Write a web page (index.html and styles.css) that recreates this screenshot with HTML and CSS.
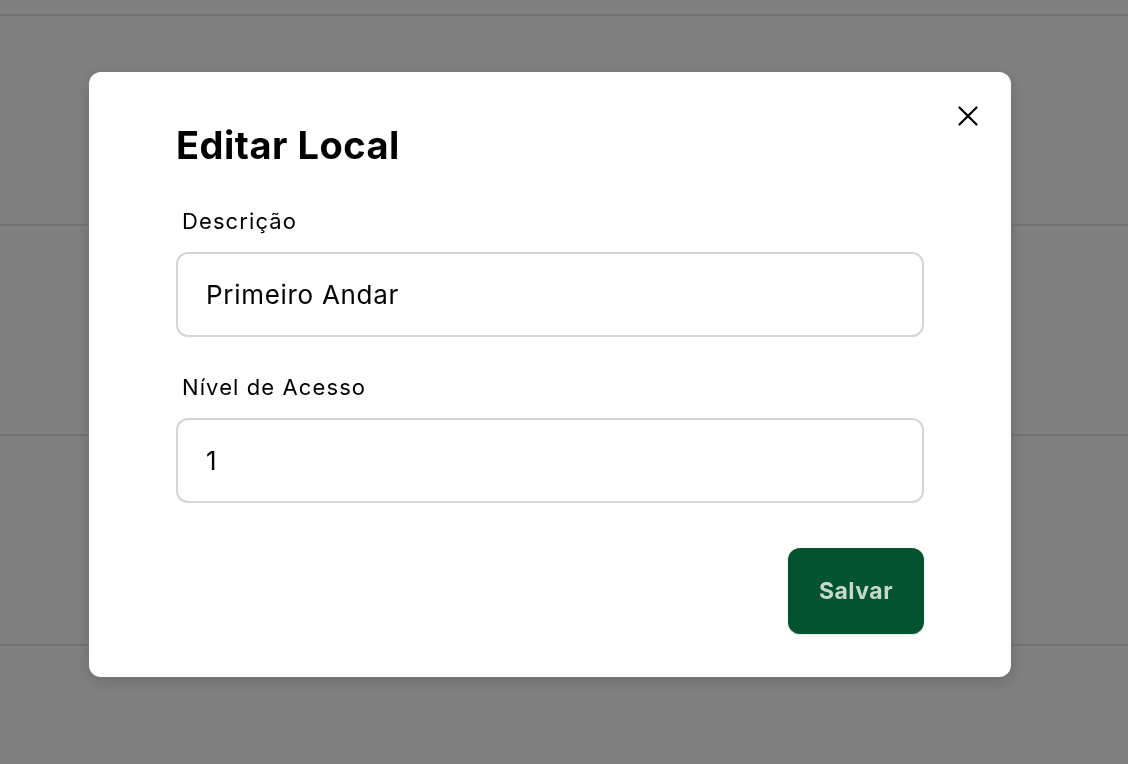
FILE: index.html
```html
<!DOCTYPE html>
<html lang="pt-BR">
<head>
<meta charset="utf-8">
<title>Editar Local</title>
<link rel="stylesheet" href="styles.css">
</head>
<body>
<div class="page">
  <div class="top-bar"></div>
  <div class="row"></div>
  <div class="row"></div>
  <div class="row"></div>
</div>
<div class="overlay">
  <div class="modal">
    <button class="close" aria-label="Fechar">
      <svg width="20" height="20" viewBox="0 0 20 20"><path d="M1.5 1.5 L18.5 18.5 M18.5 1.5 L1.5 18.5" stroke="#000" stroke-width="2.2" stroke-linecap="round" fill="none"/></svg>
    </button>
    <h2 class="title">Editar Local</h2>
    <form class="form">
      <label class="label" for="desc">Descrição</label>
      <input class="input" id="desc" type="text" value="Primeiro Andar">
      <label class="label label-second" for="nivel">Nível de Acesso</label>
      <input class="input" id="nivel" type="text" value="1">
      <div class="actions">
        <button type="button" class="save">Salvar</button>
      </div>
    </form>
  </div>
</div>
</body>
</html>
```
FILE: styles.css
```css
* { box-sizing: border-box; }
html, body { margin: 0; padding: 0; }
body {
  font-family: Inter, "Noto Sans", sans-serif;
  background: #ffffff;
  width: 1128px;
  height: 764px;
  overflow: hidden;
}
.page { display: flex; flex-direction: column; }
.top-bar { height: 16px; border-bottom: 2px solid #e9e9e9; }
.row { height: 210px; border-bottom: 2px solid #e9e9e9; flex: none; }
.overlay {
  position: fixed;
  inset: 0;
  background: rgba(0, 0, 0, 0.5);
}
.modal {
  position: relative;
  margin: 72px 0 0 89px;
  width: 922px;
  background: #fff;
  border-radius: 12px;
  padding: 51px 87px 43px 87px;
  box-shadow: 0 4px 16px rgba(0, 0, 0, 0.15);
}
.close {
  position: absolute;
  top: 34px;
  right: 33px;
  width: 20px;
  height: 20px;
  padding: 0;
  border: 0;
  background: none;
  display: flex;
}
.title {
  margin: 0;
  font-size: 38px;
  line-height: 45px;
  font-weight: 700;
  color: #000;
  letter-spacing: 0.5px;
}
.form { display: flex; flex-direction: column; margin: 41px 0 0; }
.label {
  font-size: 22px;
  line-height: 24px;
  color: #000;
  padding-left: 6px;
  margin-bottom: 19px;
  letter-spacing: 1.1px;
}
.label-second { margin-top: 38px; }
.input {
  height: 85px;
  border: 2px solid #d3d5d9;
  border-radius: 12px;
  padding: 0 0 0 28px;
  font-family: Inter, "Noto Sans", sans-serif;
  font-size: 26px;
  letter-spacing: 0.7px;
  color: #000;
  background: #fff;
  outline: none;
}
.actions { display: flex; justify-content: flex-end; margin-top: 45px; }
.save {
  width: 136px;
  height: 86px;
  border: 0;
  border-radius: 12px;
  background: #035230;
  color: #c4d9ca;
  font-family: Inter, "Noto Sans", sans-serif;
  font-size: 23px;
  font-weight: 700;
  letter-spacing: 0.5px;
  box-shadow: 0 1px 3px rgba(0, 0, 0, 0.12);
}
```
